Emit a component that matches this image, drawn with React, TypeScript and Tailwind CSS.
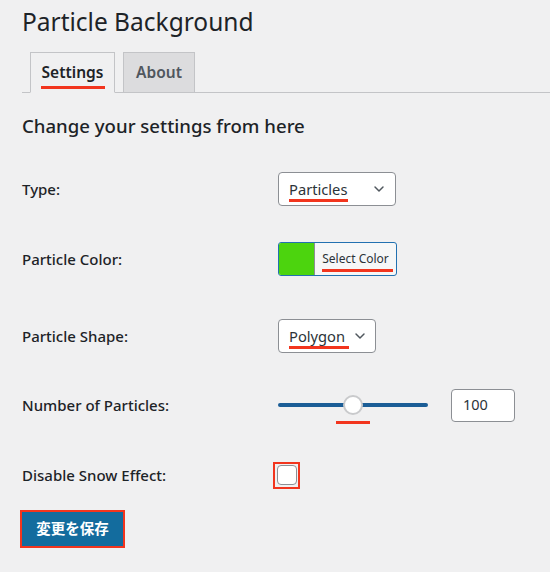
import { ChevronDown } from 'lucide-react';

const font = { fontFamily: '"Noto Sans", "Noto Sans CJK JP", sans-serif' };

function Mark({ className }: { className: string }) {
  // red annotation underline
  return <span className={`absolute h-[3px] bg-[#f2351e] ${className}`} />;
}

function Row({ label, h, children }: { label: string; h: string; children: React.ReactNode }) {
  return (
    <div className={`flex items-center ${h}`}>
      <div className="w-[256px] text-[15px] font-medium text-[#1d2327]">{label}</div>
      <div className="flex items-center">{children}</div>
    </div>
  );
}

export default function App() {
  return (
    <div className="min-h-[572px] w-[550px] bg-[#f0f0f1] text-[#1d2327]" style={font}>
      <div className="pl-[22px] pt-[6px]">
        <h1 className="text-[24.5px] leading-[32px] font-normal text-[#1d2327]">Particle Background</h1>
      </div>

      {/* tabs */}
      <div className="mt-[14px] ml-[22px] flex items-end gap-[8px] border-b border-[#c3c4c7] pl-[8px]">
        <div className="relative -mb-px flex h-[41px] w-[85px] items-center justify-center border border-[#c3c4c7] border-b-[#f0f0f1] bg-[#f0f0f1] text-[15.5px] font-semibold text-[#1d2327]">
          Settings
          <Mark className="left-[10px] bottom-[3px] w-[64px]" />
        </div>
        <div className="-mb-px flex h-[41px] w-[72px] items-center justify-center border border-[#c3c4c7] bg-[#dcdcde] text-[15.5px] font-semibold text-[#50575e]">
          About
        </div>
      </div>

      <div className="px-[22px]">
        <h2 className="pt-[20px] text-[18.6px] leading-[26px] font-medium text-[#1d2327]">Change your settings from here</h2>

        <div className="mt-[15px]">
          <Row label="Type:" h="h-[70px]">
            <div className="relative flex h-[34px] w-[118px] items-center justify-between rounded-[4px] border border-[#8c8f94] bg-white pl-[10px] pr-[8px] text-[14.7px] text-[#2c3338]">
              <span>Particles</span>
              <ChevronDown size={16} strokeWidth={2.2} className="text-[#50575e]" />
              <Mark className="left-[10px] bottom-[3px] w-[59px]" />
            </div>
          </Row>

          <Row label="Particle Color:" h="h-[70px]">
            <div className="relative flex h-[34px] w-[119px] overflow-hidden rounded-[3px] border border-[#2271b1] bg-[#f6f7f7]">
              <div className="w-[35px] bg-[#4cd40e]" />
              <div className="flex flex-1 items-center justify-center border-l border-[#8c8f94] text-[12px] text-[#2c3338]">
                Select Color
              </div>
              <Mark className="left-[43px] bottom-[3px] w-[71px]" />
            </div>
          </Row>

          <Row label="Particle Shape:" h="h-[84px]">
            <div className="relative flex h-[34px] w-[98px] items-center justify-between rounded-[4px] border border-[#8c8f94] bg-white pl-[10px] pr-[7px] text-[14.7px] text-[#2c3338]">
              <span>Polygon</span>
              <ChevronDown size={16} strokeWidth={2.2} className="text-[#50575e]" />
              <Mark className="left-[10px] bottom-[3px] w-[60px]" />
            </div>
          </Row>

          <Row label="Number of Particles:" h="h-[54px]">
            <div className="relative flex h-[20px] w-[150px] items-center">
              <div className="h-[4px] w-full rounded-full bg-[#1b5d96]" />
              <div className="absolute left-[65px] top-0 h-[20px] w-[20px] rounded-full border-2 border-[#c9cacc] bg-white" />
              <Mark className="left-[58px] top-[26px] w-[34px]" />
            </div>
            <div className="ml-[23px] flex h-[33px] w-[64px] items-center rounded-[4px] border border-[#8c8f94] bg-white pl-[11px] text-[14.5px] text-[#2c3338]">
              100
            </div>
          </Row>

          <Row label="Disable Snow Effect:" h="h-[78px] pt-[8px]">
            <div className="-ml-[5px] flex h-[27px] w-[27px] items-center justify-center border-2 border-[#f2351e]">
              <div className="h-[20px] w-[20px] rounded-[4px] border border-[#8c8f94] bg-white" />
            </div>
          </Row>
        </div>

        <div className="-ml-[2px] inline-flex border-2 border-[#f2351e]">
          <button className="flex h-[34px] w-[101px] items-center justify-center bg-[#136c9e] text-[14.5px] font-bold text-white">
            変更を保存
          </button>
        </div>
      </div>
    </div>
  );
}
